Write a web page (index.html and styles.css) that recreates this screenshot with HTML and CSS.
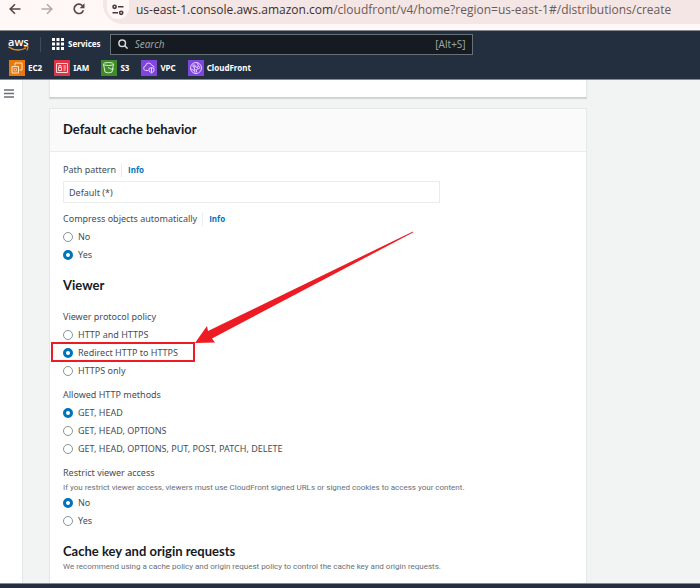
FILE: index.html
```html
<!DOCTYPE html>
<html lang="en">
<head>
<meta charset="utf-8">
<title>Create distribution</title>
<link rel="stylesheet" href="styles.css">
</head>
<body>
<div class="browser">
  <button class="browser-btn" aria-label="Back"><svg width="12" height="12" viewBox="0 0 12 12"><path d="M11.5 6H1.5M6 1.2 1.2 6 6 10.8" fill="none" stroke="#5b4642" stroke-width="1.6"/></svg></button>
  <button class="browser-btn" aria-label="Forward"><svg width="12" height="12" viewBox="0 0 12 12"><path d="M.5 6h10M6 1.2 10.8 6 6 10.8" fill="none" stroke="#b5a9a6" stroke-width="1.6"/></svg></button>
  <button class="browser-btn" aria-label="Reload"><svg width="12" height="12" viewBox="0 0 12 12"><path d="M10.4 7.2A4.7 4.7 0 1 1 9.5 2.8L10.6 4" fill="none" stroke="#5b4642" stroke-width="1.6"/><path d="M11.5.3v4.9H6.6z" fill="#5b4642"/></svg></button>
  <div class="address">
    <button class="site-info" aria-label="Site information"><svg width="12" height="12" viewBox="0 0 12 12"><g fill="none" stroke="#4b3a37" stroke-width="1.6"><circle cx="2.6" cy="2.8" r="1.6"/><path d="M6 2.8h5.5M.5 8.8H6"/><circle cx="9.2" cy="8.8" r="1.6"/></g></svg></button>
    <div class="url"><span class="url-host">us-east-1.console.aws.amazon.com</span>/cloudfront/v4/home?region=us-east-1#/distributions/create</div>
  </div>
</div>

<header class="console">
  <div class="console-row">
    <a class="logo" href="#" aria-label="AWS home"><span class="logo-text">aws</span><svg class="smile" width="21" height="6" viewBox="0 0 21 6"><path d="M.5.8Q9 6.6 18 2" fill="none" stroke="#e8922c" stroke-width="1.4"/><path d="M16 .9q3-.9 4 0 .2 1.500-1.300 3.400" fill="none" stroke="#e8922c" stroke-width="1.100"/></svg></a>
    <button class="services"><svg width="12" height="12" viewBox="0 0 12 12" fill="#fff"><path d="M0 0h3v3H0zM4.500 0h3v3h-3zM9 0h3v3H9zM0 4.500h3v3H0zM4.500 4.500h3v3h-3zM9 4.500h3v3H9zM0 9h3v3H0zM4.500 9h3v3h-3zM9 9h3v3H9z"/></svg>Services</button>
    <label class="search"><svg width="10" height="10" viewBox="0 0 10 10"><g fill="none" stroke="#d5dbdb" stroke-width="1.5"><circle cx="4.200" cy="4.200" r="3.300"/><path d="m6.600 6.600 3 3"/></g></svg><input type="search" placeholder="Search" aria-label="Search"><span>[Alt+S]</span></label>
  </div>
  <nav class="favorites">
    <a href="#"><svg class="orange" width="16" height="16" viewBox="0 0 16 16"><g fill="none" stroke="#ffe3c2"><path d="M6 5.500V3h7v7h-2.500"/><path d="M3 6.500h6.500V13H3z"/><path d="M5 8.500h2.500V11H5z" stroke-width=".6"/></g></svg>EC2</a>
    <a href="#"><svg class="red" width="16" height="16" viewBox="0 0 16 16"><g fill="none" stroke="#ffd5da"><path d="M2.500 3.500h11v9h-11zM4.500 7.500h3v3h-3zM5 7V5.500h2V7M9.500 6h2.500M9.500 8h2.500M9.500 10h2"/></g></svg>IAM</a>
    <a href="#"><svg class="green" width="16" height="16" viewBox="0 0 16 16"><g fill="none" stroke="#d8f0cf"><ellipse cx="7.500" cy="4" rx="5" ry="1.500"/><path d="M2.500 4 4 12q3.500 2 7 0l1.500-8M7 7.500q3.500 2.500 6 1.500"/></g></svg>S3</a>
    <a href="#"><svg class="purple" width="16" height="16" viewBox="0 0 16 16"><g fill="none" stroke="#e3d3ff"><path d="M7 10.500H4.500A2.300 2.300 0 0 1 4.500 6Q5 3 7.500 3T11 5.500q2 0 2 2"/><path d="M8 8.500 10.500 7.500 13 8.500v2.500l-2.500 2-2.500-2zM10.500 8v4.500"/></g></svg>VPC</a>
    <a href="#"><svg class="purple" width="16" height="16" viewBox="0 0 16 16"><g fill="none" stroke="#e3d3ff"><circle cx="8" cy="8" r="5.500"/><circle cx="6" cy="6" r="1.200"/><circle cx="10.500" cy="7.500" r="1.200"/><circle cx="7.500" cy="11" r="1.200"/><path d="m7 6.500 2.500 1M10 8.500 8.500 10M6 7.200l1 2.800M9 3l1.500 3M3 9l3.300 1.500"/></g></svg>CloudFront</a>
  </nav>
</header>

<div class="workspace">
  <aside class="rail"><button aria-label="Open navigation"><svg width="10" height="9" viewBox="0 0 10 9"><path d="M0 1h10M0 4.500h10M0 8h10" stroke="#687078" stroke-width="1.500"/></svg></button></aside>
  <main class="content">
    <section class="card card-tail"></section>
    <section class="card">
      <h2 class="card-title">Default cache behavior</h2>
      <form class="card-body">
        <div class="field">
          <div class="label-row"><label for="path">Path pattern</label><a class="info" href="#">Info</a></div>
          <input class="text-input" id="path" type="text" value="Default (*)" readonly>
        </div>
        <fieldset class="field">
          <legend class="label-row">Compress objects automatically<a class="info" href="#">Info</a></legend>
          <div class="options">
            <label><input type="radio" name="compress">No</label>
            <label><input type="radio" name="compress" checked>Yes</label>
          </div>
        </fieldset>
        <h3>Viewer</h3>
        <fieldset class="field field-first">
          <legend class="label-row">Viewer protocol policy</legend>
          <div class="options">
            <label><input type="radio" name="policy">HTTP and HTTPS</label>
            <label class="marked"><input type="radio" name="policy" checked>Redirect HTTP to HTTPS
              <svg class="arrow" width="222" height="114" viewBox="0 0 222 114" aria-hidden="true"><path d="M1 113 13 96l1 5L219 1.500v1L18 108.500l3 4z" fill="#ed1c24"/></svg></label>
            <label><input type="radio" name="policy">HTTPS only</label>
          </div>
        </fieldset>
        <fieldset class="field">
          <legend class="label-row">Allowed HTTP methods</legend>
          <div class="options">
            <label><input type="radio" name="methods" checked>GET, HEAD</label>
            <label><input type="radio" name="methods">GET, HEAD, OPTIONS</label>
            <label><input type="radio" name="methods">GET, HEAD, OPTIONS, PUT, POST, PATCH, DELETE</label>
          </div>
        </fieldset>
        <fieldset class="field">
          <legend class="label-row">Restrict viewer access</legend>
          <p class="hint">If you restrict viewer access, viewers must use CloudFront signed URLs or signed cookies to access your content.</p>
          <div class="options">
            <label><input type="radio" name="restrict" checked>No</label>
            <label><input type="radio" name="restrict">Yes</label>
          </div>
        </fieldset>
        <h3>Cache key and origin requests</h3>
        <p class="hint">We recommend using a cache policy and origin request policy to control the cache key and origin requests.</p>
      </form>
    </section>
  </main>
</div>
<footer class="footer"></footer>
</body>
</html>
```
FILE: styles.css
```css
* { box-sizing: border-box; }

body {
  margin: 0;
  min-height: 100vh;
  display: flex;
  flex-direction: column;
  font: 9px/18px "Noto Sans", "Open Sans", sans-serif;
  color: #464d56;
  background: #f2f3f3;
}

svg { display: block; flex: none; }
a { color: inherit; text-decoration: none; }
h2, h3, p { margin: 0; }
button { padding: 0; border: 0; background: none; color: inherit; font: inherit; }
fieldset { margin: 0; padding: 0; border: 0; min-width: 0; }
legend { padding: 0; }

/* Browser toolbar */
.browser {
  display: flex;
  gap: 20px;
  height: 30px;
  padding-left: 9px;
  background: #fff8f6;
}
.browser-btn { width: 12px; height: 18px; display: flex; align-items: center; }
.address {
  flex: 1;
  display: flex;
  gap: 7px;
  height: 24px;
  min-width: 0;
  margin-left: -2px;
  padding-left: 4px;
  border-bottom-left-radius: 20px;
  background: #f3e6e4;
}
.site-info {
  display: grid;
  place-items: center;
  flex: none;
  width: 22px;
  height: 19px;
  border-radius: 0 0 11px 11px;
  background: #fff8f6;
}
.url {
  font: 12px/19px "Open Sans", sans-serif;
  color: #6b5b58;
  white-space: nowrap;
}
.url-host { color: #3b302e; }

/* Console header */
.console {
  height: 50px;
  border-top: 1px solid #858990;
  border-bottom: 1px solid #858990;
  background: #232f3e;
  color: #fff;
  font: 700 8px/18px "Noto Sans", sans-serif;
}
.console-row { display: flex; align-items: center; height: 26px; padding-left: 8px; }
.logo {
  width: 33px;
  height: 15px;
  border-right: 1px solid #414b58;
}
.logo-text { display: block; font: 600 11px/9px "Open Sans", sans-serif; }
.services { display: flex; align-items: center; gap: 4px; margin: 0 9px 0 11px; }
.search {
  display: flex;
  align-items: center;
  gap: 7px;
  flex: 0 1 363px;
  height: 21px;
  padding: 0 6px 0 7px;
  border: 1px solid #687078;
  background: #161a21;
  color: #95a5a6;
  font-size: 10px;
  font-weight: 400;
}
.search input {
  flex: 1;
  min-width: 0;
  padding: 0;
  border: 0;
  outline: 0;
  background: none;
  color: #fff;
  font: inherit;
}
.search input::placeholder { color: #95a5a6; font-style: italic; }
.favorites { display: flex; gap: 12px; padding: 3px 9px 0; }
.favorites a { display: flex; align-items: center; gap: 3px; height: 16px; }
.orange { background: #e8780c; }
.red { background: #dd3545; }
.green { background: #3f8a29; }
.purple { background: #8045dc; }

/* Workspace */
.workspace { flex: 1; display: flex; }
.rail {
  flex: none;
  width: 23px;
  padding: 9px 4px;
  border-right: 1px solid #e4e8e8;
  background: #fff;
}
.rail button { display: block; }
.content { flex: 1; min-width: 0; padding: 0 113px 0 26px; display: flex; flex-direction: column; gap: 10px; }
.card {
  border: 1px solid #e4e8e8;
  background: #fff;
  box-shadow: 0 1px 1px #d5dbdb;
}
.card:last-child { flex: 1; border-bottom: 0; box-shadow: none; }
.card-tail { height: 18px; border-top: 0; border-bottom-color: #c8cfd0; }
.card-title {
  padding: 10px 13px 12px;
  border-bottom: 1px solid #eaeded;
  background: #fafafa;
}
.card-title, h3 { color: #16191f; font: 700 13px/20px Lato, sans-serif; }
.card-body { padding: 9px 13px 8px; }
h3 { margin-top: 12px; }
.field + .field { margin-top: 7px; }
.field-first { margin-top: 13px; }
.label-row { display: flex; align-items: center; height: 18px; }
.info {
  margin-left: 5px;
  padding-left: 6px;
  border-left: 1px solid #eaeded;
  color: #0073bb;
  font: 700 8px/14px "Open Sans", sans-serif;
}
.text-input {
  display: block;
  width: 74%;
  height: 22px;
  margin-top: 2px;
  padding: 0 5px;
  border: 1px solid #eaeded;
  background: #fff;
  color: inherit;
  font: inherit;
}
.options { display: flex; flex-direction: column; align-items: flex-start; gap: 1px; }
.options label { display: flex; align-items: center; gap: 5px; height: 17px; }
.options input {
  appearance: none;
  width: 10px;
  height: 10px;
  margin: 0;
  border: 1px solid #879596;
  border-radius: 50%;
  background: #fff;
}
.options input:checked { border: 3px solid #0073bb; }
.hint { color: #687078; font: 8px/12px Roboto, sans-serif; }

/* Annotation over the chosen option */
.options .marked { position: relative; }
.marked::before {
  content: "";
  position: absolute;
  inset: -2px -17px -1px -12px;
  border: 2px solid #ed1c24;
}
.arrow { position: absolute; left: 131px; bottom: 17px; }

.footer { height: 5px; border-top: 1px solid #858990; background: #232f3e; }
```
